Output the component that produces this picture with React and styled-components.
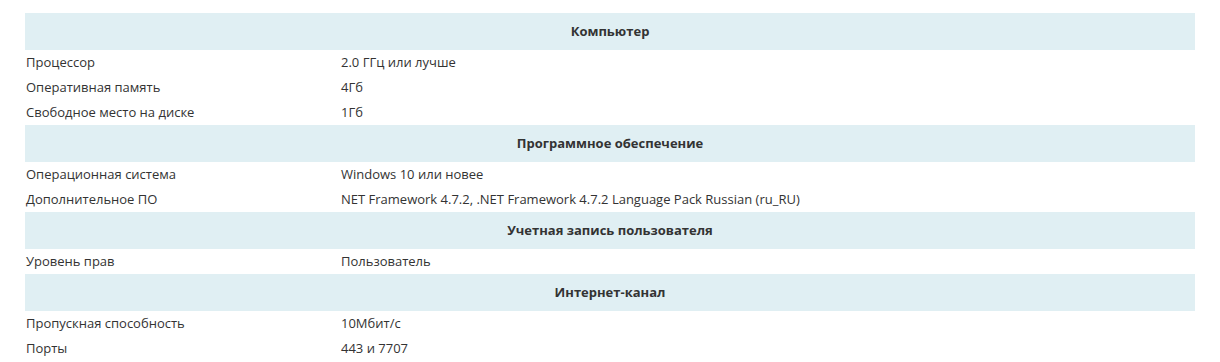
import styled, { createGlobalStyle } from "styled-components";

const GlobalStyle = createGlobalStyle`
  body {
    margin: 0;
    background: #fff;
    font-family: "Open Sans", "Liberation Sans", sans-serif;
    color: #333;
  }
`;

const Wrap = styled.div`
  padding: 13px 25px;
`;

const Table = styled.div`
  width: 1170px;
  display: grid;
  grid-template-columns: 315px 1fr;
  font-size: 13px;
`;

const SectionHead = styled.div`
  grid-column: 1 / -1;
  height: 37px;
  box-sizing: border-box;
  padding-bottom: 2px;
  display: flex;
  align-items: center;
  justify-content: center;
  background: #e0eff3;
  font-weight: 700;
  color: #333;
`;

const Cell = styled.div`
  height: 25px;
  box-sizing: border-box;
  padding: 0 0 2px 1px;
  display: flex;
  align-items: center;
  white-space: nowrap;
`;

const sections = [
  {
    title: "Компьютер",
    rows: [
      ["Процессор", "2.0 ГГц или лучше"],
      ["Оперативная память", "4Гб"],
      ["Свободное место на диске", "1Гб"],
    ],
  },
  {
    title: "Программное обеспечение",
    rows: [
      ["Операционная система", "Windows 10 или новее"],
      [
        "Дополнительное ПО",
        "NET Framework 4.7.2, .NET Framework 4.7.2 Language Pack Russian (ru_RU)",
      ],
    ],
  },
  {
    title: "Учетная запись пользователя",
    rows: [["Уровень прав", "Пользователь"]],
  },
  {
    title: "Интернет-канал",
    rows: [
      ["Пропускная способность", "10Мбит/с"],
      ["Порты", "443 и 7707"],
    ],
  },
];

export default function App() {
  return (
    <>
      <GlobalStyle />
      <Wrap>
        <Table>
          {sections.map((s) => (
            <>
              <SectionHead key={s.title}>{s.title}</SectionHead>
              {s.rows.map(([k, v]) => (
                <>
                  <Cell key={k}>{k}</Cell>
                  <Cell>{v}</Cell>
                </>
              ))}
            </>
          ))}
        </Table>
      </Wrap>
    </>
  );
}
